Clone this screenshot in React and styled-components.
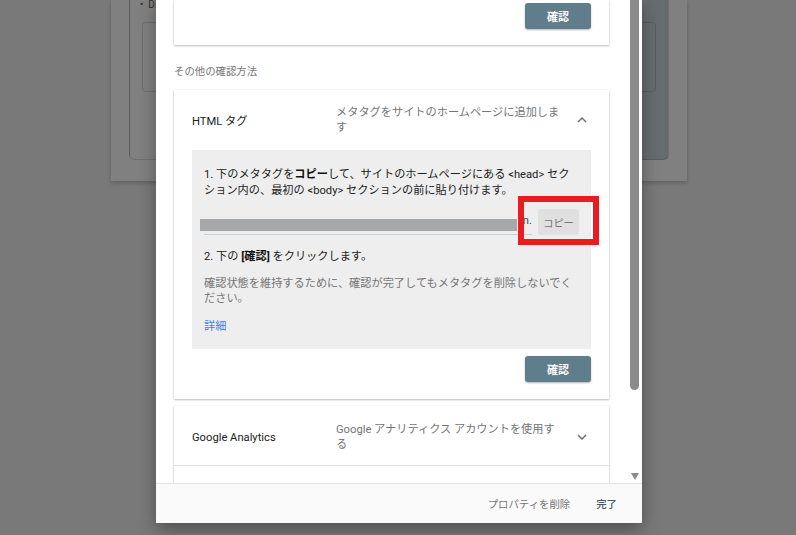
import React from "react";
import styled, { createGlobalStyle } from "styled-components";

const GlobalStyle = createGlobalStyle`
  html, body {
    margin: 0;
    padding: 0;
    background: #79797a;
    overflow: hidden;
  }
  body {
    font-family: Roboto, "Noto Sans CJK JP", sans-serif;
  }
`;

const Stage = styled.div`
  position: relative;
  width: 796px;
  height: 535px;
  overflow: hidden;
`;

/* ---------- dimmed page behind the dialog ---------- */

const BackdropPage = styled.div`
  padding-left: 111px;
`;

const DimPanel = styled.div`
  width: 576px;
  height: 181px;
  box-sizing: border-box;
  background: #808080;
  padding: 0 18px 21px;
  display: flex;
  box-shadow: 0 2px 4px rgba(0, 0, 0, 0.22);
`;

const DimCard = styled.div`
  flex: 1;
  display: flex;
  flex-direction: column;
  padding: 0 12px 0 10px;
  border: 1px solid rgba(0, 0, 0, 0.14);
  border-top: none;
  border-radius: 0 0 6px 6px;
  background: linear-gradient(90deg, transparent 94.8%, #676c6f 94.8%);
`;

const DimBullet = styled.div`
  height: 10px;
  line-height: 10px;
  font-size: 10px;
  color: #2e2e2e;
  white-space: nowrap;
`;

const DimField = styled.div`
  margin: 12px 0 0 2px;
  height: 68px;
  border: 1px solid rgba(0, 0, 0, 0.14);
  border-radius: 4px;
`;

/* ---------- dialog ---------- */

const Dialog = styled.div`
  position: absolute;
  left: 156px;
  top: 0;
  width: 486px;
  height: 523px;
  background: #fff;
  display: flex;
  flex-direction: column;
  box-shadow: 0 6px 16px rgba(0, 0, 0, 0.35);
`;

const DialogBody = styled.div`
  flex: 1;
  min-height: 0;
  display: flex;
`;

const Scroller = styled.div`
  flex: 1;
  overflow: hidden;
  padding: 0 18px;
`;

const ScrollTrack = styled.div`
  width: 15px;
  background: #fff;
  display: flex;
  flex-direction: column;
  align-items: center;
  justify-content: space-between;
`;

const ScrollThumb = styled.div`
  width: 9px;
  height: 390px;
  background: #8b8b8b;
  border-radius: 0 0 5px 5px;
`;

const ScrollArrow = styled.div`
  width: 0;
  height: 0;
  margin-bottom: 3px;
  border-left: 4.5px solid transparent;
  border-right: 4.5px solid transparent;
  border-top: 7px solid #8b8b8b;
`;

const Card = styled.div`
  background: #fff;
  box-shadow: 0 1px 2px rgba(0, 0, 0, 0.26), 0 0 1px rgba(0, 0, 0, 0.14);
  margin-top: ${(p) => p.$gap || 0}px;
`;

const CardTail = styled(Card)`
  display: flex;
  justify-content: flex-end;
  padding: 3px 18px 16px;
`;

const PrimaryButton = styled.button`
  width: 66px;
  height: 26px;
  border: none;
  border-radius: 3px;
  background: #607d8b;
  color: #fff;
  font-family: inherit;
  font-size: 11px;
  font-weight: 700;
  box-shadow: 0 1px 2px rgba(0, 0, 0, 0.3);
  cursor: pointer;
`;

const SectionLabel = styled.div`
  margin: 19px 0 10px;
  font-size: 10.4px;
  line-height: 16px;
  color: #757575;
`;

const PanelHeader = styled.div`
  height: ${(p) => p.$h}px;
  box-sizing: border-box;
  display: flex;
  align-items: center;
  padding: ${(p) => p.$shift || 0}px 18px 0;
  border-bottom: ${(p) => (p.$divided ? "1px solid #e0e0e0" : "none")};
`;

const PanelTitle = styled.div`
  width: 144px;
  flex: none;
  font-size: 11.2px;
  color: #212121;
`;

const PanelDesc = styled.div`
  width: 226px;
  flex: none;
  font-size: 11.2px;
  line-height: 15px;
  color: #757575;
`;

const ChevronWrap = styled.span`
  margin-left: auto;
  display: flex;
  width: 18px;
  height: 18px;
`;

const PanelBody = styled.div`
  padding: 1px 18px 17px;
`;

const InstructionBox = styled.div`
  background: #eeeeee;
  padding: 17px 12px 14px;
  font-size: 11.2px;
  line-height: 16px;
  color: #212121;
`;

const Strong = styled.b`
  font-weight: 700;
  color: #111;
`;

const Code = styled.span`
  font-family: "Liberation Sans Narrow", Roboto, sans-serif;
  font-size: 11.2px;
`;

const FieldRow = styled.div`
  margin-top: 10px;
  display: flex;
  align-items: center;
  gap: 6px;
`;

const Field = styled.div`
  position: relative;
  flex: 1;
  height: 26px;
  box-sizing: border-box;
  border-bottom: 1px solid #cfcfcf;
  display: flex;
  align-items: center;
  justify-content: flex-end;
  padding-bottom: 1px;
  font-size: 11.2px;
  color: #444;
`;

const Redaction = styled.div`
  position: absolute;
  left: -4px;
  top: 10px;
  width: 317px;
  height: 12px;
  background: #a7a8aa;
`;

const CopyWrap = styled.div`
  position: relative;
  flex: none;
`;

const CopyButton = styled.button`
  display: block;
  width: 41px;
  height: 26px;
  border: none;
  border-radius: 3px;
  background: #e0e0e0;
  color: #757575;
  font-family: inherit;
  font-size: 10.2px;
  padding: 0;
`;

const Highlight = styled.div`
  position: absolute;
  top: -13px;
  left: -20px;
  right: -20px;
  bottom: -10px;
  border: 6px solid #e91c22;
  pointer-events: none;
`;

const Step = styled.div`
  margin-top: 14px;
`;

const Note = styled.div`
  margin-top: 11px;
  line-height: 15px;
  color: #757575;
`;

const DetailLink = styled.a`
  display: block;
  margin-top: 13px;
  color: #4a7fe6;
  text-decoration: none;
`;

const ActionRow = styled.div`
  margin-top: 7px;
  display: flex;
  justify-content: flex-end;
`;

const Footer = styled.div`
  height: 40px;
  box-sizing: border-box;
  border-top: 1px solid #e3e3e3;
  background: #fafafa;
  display: flex;
  align-items: center;
  justify-content: flex-end;
  gap: 26px;
  padding: 0 25px 1px 0;
  font-size: 10.4px;
`;

const FooterAction = styled.span`
  color: ${(p) => (p.$primary ? "#455a64" : "#757575")};
  font-weight: ${(p) => (p.$primary ? 500 : 400)};
  cursor: pointer;
`;

const Chevron = ({ up }) => (
  <ChevronWrap>
    <svg width="18" height="18" viewBox="0 0 24 24">
      <path
        fill="#6f6f6f"
        d={
          up
            ? "M12 8l-6 6 1.41 1.41L12 10.83l4.59 4.58L18 14z"
            : "M16.59 8.59L12 13.17 7.41 8.59 6 10l6 6 6-6z"
        }
      />
    </svg>
  </ChevronWrap>
);

export default function App() {
  return (
    <Stage>
      <GlobalStyle />
      <BackdropPage>
        <DimPanel>
          <DimCard>
            <DimBullet>•&nbsp;&nbsp;DNS</DimBullet>
            <DimField />
          </DimCard>
        </DimPanel>
      </BackdropPage>

      <Dialog>
        <DialogBody>
          <Scroller>
            <CardTail>
              <PrimaryButton>確認</PrimaryButton>
            </CardTail>

            <SectionLabel>その他の確認方法</SectionLabel>

            <Card>
              <PanelHeader $h={59}>
                <PanelTitle>HTML タグ</PanelTitle>
                <PanelDesc>メタタグをサイトのホームページに追加します</PanelDesc>
                <Chevron up />
              </PanelHeader>
              <PanelBody>
                <InstructionBox>
                  <div>
                    1. 下のメタタグを<Strong>コピー</Strong>して、サイトのホームページにある{" "}
                    <Code>&lt;head&gt;</Code> セク
                    <br />
                    ション内の、最初の <Code>&lt;body&gt;</Code> セクションの前に貼り付けます。
                  </div>
                  <FieldRow>
                    <Field>
                      <Redaction />
                      n.
                    </Field>
                    <CopyWrap>
                      <CopyButton>コピー</CopyButton>
                      <Highlight />
                    </CopyWrap>
                  </FieldRow>
                  <Step>
                    2. 下の <Strong>[確認]</Strong> をクリックします。
                  </Step>
                  <Note>
                    確認状態を維持するために、確認が完了してもメタタグを削除しないでください。
                  </Note>
                  <DetailLink href="#">詳細</DetailLink>
                </InstructionBox>
                <ActionRow>
                  <PrimaryButton>確認</PrimaryButton>
                </ActionRow>
              </PanelBody>
            </Card>

            <Card $gap={7}>
              <PanelHeader $h={60} $shift={3} $divided>
                <PanelTitle>Google Analytics</PanelTitle>
                <PanelDesc>Google アナリティクス アカウントを使用する</PanelDesc>
                <Chevron />
              </PanelHeader>
              <PanelHeader $h={60} />
            </Card>
          </Scroller>
          <ScrollTrack>
            <ScrollThumb />
            <ScrollArrow />
          </ScrollTrack>
        </DialogBody>
        <Footer>
          <FooterAction>プロパティを削除</FooterAction>
          <FooterAction $primary>完了</FooterAction>
        </Footer>
      </Dialog>
    </Stage>
  );
}
